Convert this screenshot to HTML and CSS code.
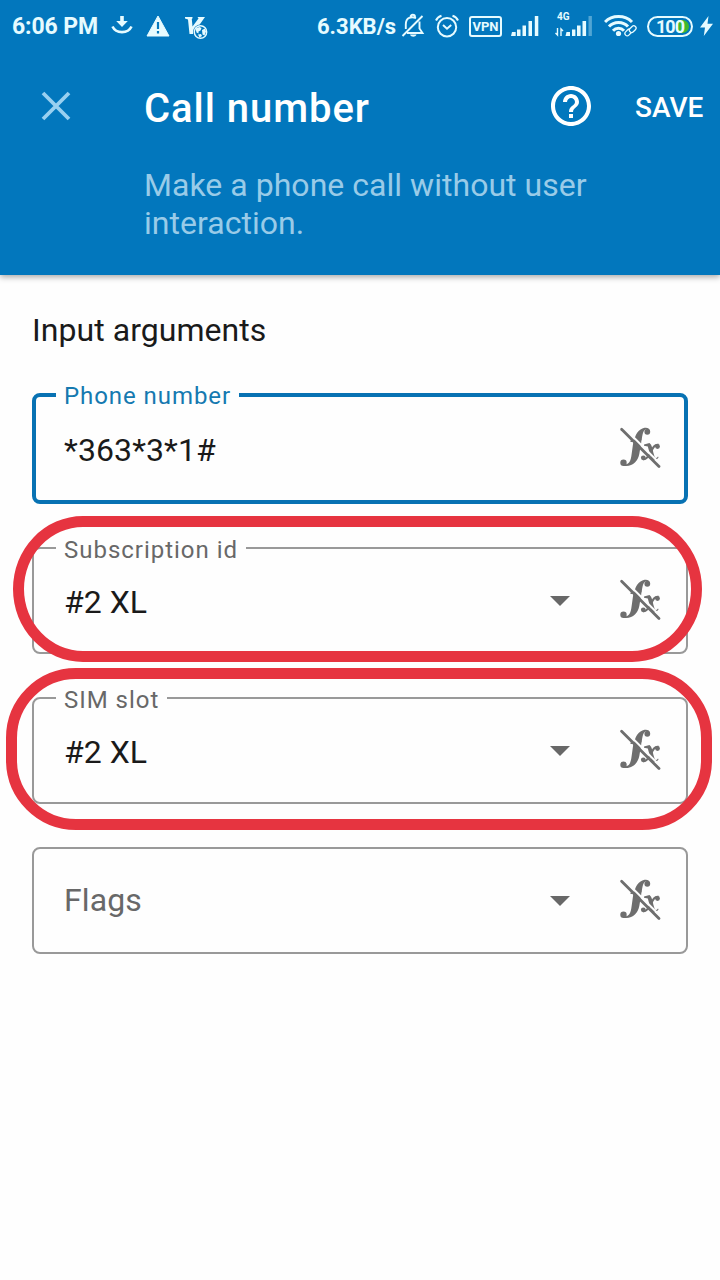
FILE: index.html
```html
<!DOCTYPE html>
<html lang="en">
<head>
<meta charset="utf-8">
<title>Call number</title>
<link rel="stylesheet" href="styles.css">
</head>
<body>
<svg class="defs" width="0" height="0" aria-hidden="true">
  <symbol id="fx-off" viewBox="0 0 48 48">
    <g fill="currentColor">
      <path d="M34 9.500C34.200 6.500 31.500 5.300 28.500 5.800C22.500 7 19.500 12.500 18.200 18.500H14.500V20H17.300L15.500 33C14.700 38.500 13.500 41.700 10 42.200L7 40V43.700C16 45.500 21.800 39.500 23.300 32L25.300 20V18.500H25.700C26.300 12.500 27.300 7.800 30 7.500Z"/>
      <circle cx="31.300" cy="9.800" r="2.900"/>
      <circle cx="7.500" cy="40.800" r="3.200"/>
      <circle cx="41.500" cy="24.500" r="2.400"/>
      <circle cx="27.300" cy="35.800" r="2.400"/>
      <path d="M28 22.500L33.500 21C36 23 36.600 27 37.300 30.500L38.500 34.500C39.300 36.500 40.500 36.500 42 34.500L42.600 35.200C40 39.500 36 38.500 34.700 35L31.800 24.500L28 23.800Z"/>
    </g>
    <path d="M42.500 22.800C38.500 21.800 36.500 26.500 34.500 30.500S30.500 38 27 37" fill="none" stroke="currentColor" stroke-width="2"/>
    <path d="M7.300 5L46.300 44" stroke="#fefefe" stroke-width="2"/>
    <path d="M5.600 7.200L43 44.600" stroke="currentColor" stroke-width="2.800" stroke-linecap="round"/>
  </symbol>
</svg>

<header class="top">
  <div class="status">
    <span class="clock">6:06 PM</span>
    <svg class="st-download" width="22" height="22" viewBox="0 0 22 22"><path d="M9.200 1h3.600v5h4L11 12 5.200 6h4z" fill="currentColor"/><path d="M1.500 11.500C5 19 17 19 20.500 11.500" fill="none" stroke="currentColor" stroke-width="2.600"/></svg>
    <svg class="st-warn" width="24" height="22" viewBox="0 0 24 22"><path d="M12 1L23 21H1z" fill="currentColor" stroke="currentColor" stroke-linejoin="round"/><path d="M12 7v7M12 16v2.500" stroke="#0277bd" stroke-width="2.200"/></svg>
    <svg class="st-vglobe" width="24" height="24" viewBox="0 0 24 24"><path d="M0 1h7.500v1.200L6.800 3 7.500 10.500 13.500 2.500 12.500 1H20L8 18H4.500L3 3.500 0 2.500z" fill="currentColor"/><circle cx="15.500" cy="16" r="7.500" fill="#0277bd"/><circle cx="15.500" cy="16" r="6.200" fill="none" stroke="currentColor" stroke-width="1.400"/><path d="M10.500 12.500l4-1.500 2 1-1 2.500-2 1v2l-2-1zM17 14l3-1.500 1 3-1.500 4-2-1zM13 18.500l3-.5 1 2-2.500 1.500z" fill="currentColor"/></svg>
    <span class="rate">6.3KB/s</span>
    <svg class="st-bell" width="24" height="26" viewBox="0 0 24 26"><g fill="none" stroke="currentColor" stroke-width="1.900"><path d="M18.500 8.500v7l3 4.500H6M4.800 16V11.500C4.800 4 10.500 3.500 15 5M9.500 4a2 2 0 0 1 4.500 0M1.500 23L21.500 3"/></g><path d="M9 21.500h6.500c-1 3-5.500 3-6.500 0z" fill="currentColor"/></svg>
    <svg class="st-alarm" width="24" height="26" viewBox="0 0 24 26"><g fill="none" stroke="currentColor" stroke-width="2"><circle cx="12" cy="14.200" r="9.200"/><path d="M1 7.500Q2.500 4 6.500 2.800M17.500 2.800Q21.500 4 23 7.500M8 12l4 3.700 4.200-3.700"/></g></svg>
    <span class="vpn">VPN</span>
    <svg class="st-sig" width="28" height="22" viewBox="0 0 28 22"><path d="M1 17h3.700v4H0zM6 14.500h3.500V21H6zM11.500 10.500H15V21h-3.500zM17.500 6H21v15h-3.500zM23.800 1h3.500v20h-3.500z" fill="currentColor"/></svg>
    <div class="lte">
      <span>4G</span>
      <svg width="38" height="22" viewBox="0 0 38 22"><path d="M2.500 13v7L.5 18M6 21v-7l2 2" fill="none" stroke="currentColor" stroke-width="1.400"/><path d="M11.500 17H15v4h-4.500zM17 14.500h3.400V21H17zM22 10.500h3.600V21H22zM27.500 6h3.600v15h-3.600z" fill="currentColor"/><path d="M33.500 1h3.400v20h-3.400z" fill="currentColor" opacity=".35"/></svg>
    </div>
    <svg class="st-wifi" width="33" height="22" viewBox="0 0 33 22"><g fill="none" stroke="currentColor" stroke-width="3"><path d="M1 7C8-.3 21-.3 28 7M5 11.500C10 6 19 6 24 11.500M9 15.700C12 12.400 17 12.400 20 15.700"/></g><circle cx="14.500" cy="18.500" r="2.600" fill="currentColor"/><g transform="rotate(-45 26 16)" fill="#0277bd" stroke="currentColor" stroke-width="1.300"><rect x="20" y="13.500" width="7.500" height="4.600" rx="2.300"/><rect x="25.500" y="14.300" width="7.500" height="4.600" rx="2.300"/></g></svg>
    <div class="battery"><span>100</span></div>
    <svg class="st-bolt" width="13" height="20" viewBox="0 0 13 20"><path d="M8.500 0L0 11.500h5L3.800 20 13 7.800H7.500z" fill="currentColor"/></svg>
  </div>
  <div class="bar">
    <svg class="close" width="30" height="30" viewBox="0 0 30 30"><path d="M2 2L28 28M28 2L2 28" stroke="currentColor" stroke-width="3.800"/></svg>
    <h1 class="title">Call number</h1>
    <svg class="help" width="48" height="48" viewBox="0 0 24 24"><path fill="currentColor" d="M11 18h2v-2h-2v2zm1-16C6.480 2 2 6.480 2 12s4.480 10 10 10 10-4.480 10-10S17.520 2 12 2zm0 18c-4.410 0-8-3.590-8-8s3.590-8 8-8 8 3.590 8 8-3.590 8-8 8zm0-14c-2.210 0-4 1.790-4 4h2c0-1.100.9-2 2-2s2 .9 2 2c0 2-3 1.750-3 5h2c0-2.250 3-2.500 3-5 0-2.210-1.790-4-4-4z"/></svg>
    <span class="save">SAVE</span>
  </div>
  <p class="subtitle">Make a phone call without user interaction.</p>
</header>

<main class="form">
  <h2 class="section">Input arguments</h2>
  <div class="field focused">
    <span class="label">Phone number</span>
    <span class="value">*363*3*1#</span>
    <svg class="fx"><use href="#fx-off"/></svg>
  </div>
  <div class="field">
    <span class="label">Subscription id</span>
    <span class="value">#2 XL</span>
    <svg class="arrow" viewBox="0 0 20 10"><path d="M0 0h20L10 10z" fill="currentColor"/></svg>
    <svg class="fx"><use href="#fx-off"/></svg>
    <i class="ring ring-sub"></i>
  </div>
  <div class="field">
    <span class="label">SIM slot</span>
    <span class="value">#2 XL</span>
    <svg class="arrow" viewBox="0 0 20 10"><path d="M0 0h20L10 10z" fill="currentColor"/></svg>
    <svg class="fx"><use href="#fx-off"/></svg>
    <i class="ring ring-sim"></i>
  </div>
  <div class="field">
    <span class="value placeholder">Flags</span>
    <svg class="arrow" viewBox="0 0 20 10"><path d="M0 0h20L10 10z" fill="currentColor"/></svg>
    <svg class="fx"><use href="#fx-off"/></svg>
  </div>
</main>
</body>
</html>
```
FILE: styles.css
```css
* { box-sizing: border-box; }
body {
  margin: 0;
  width: 720px;
  height: 1280px;
  overflow: hidden;
  background: #fefefe;
  color: #1a1a1a;
  font-family: Roboto, "Liberation Sans", sans-serif;
}
svg { display: block; flex: none; }
.defs { position: absolute; }

.top {
  height: 275px;
  background: #0277bd;
  color: #fff;
  box-shadow: 0 2px 6px rgba(0, 0, 0, .35);
}
.status {
  display: flex;
  align-items: center;
  height: 52px;
  padding-left: 12px;
  color: #e6fbff;
  white-space: nowrap;
}
.clock, .rate {
  margin-top: 2px;
  font-weight: 700;
  font-size: 23px;
  line-height: 28px;
}
.clock { width: 99px; letter-spacing: -.1px; }
.st-warn { margin-left: 13px; }
.st-vglobe { margin: 4px 0 0 15px; }
.rate { width: 84px; margin-left: 108px; font-size: 22px; }
.st-alarm { margin-left: 10px; }
.vpn {
  width: 33px;
  height: 21px;
  margin-left: 10px;
  border: 2px solid;
  border-radius: 3px;
  font-size: 13px;
  font-weight: 700;
  line-height: 18px;
  text-align: center;
}
.st-sig { margin-left: 9px; }
.lte {
  display: flex;
  flex-direction: column;
  width: 38px;
  margin-left: 16px;
  position: relative;
}
.lte span {
  position: absolute;
  left: 2px;
  top: -4px;
  font-size: 10px;
  font-weight: 700;
  line-height: 12px;
}
.st-wifi { margin-left: 11px; }
.battery {
  width: 46px;
  height: 21px;
  margin-left: 10px;
  border: 2px solid;
  border-radius: 11px;
  padding: 2px;
}
.battery span {
  display: block;
  height: 13px;
  border-radius: 7px;
  background: linear-gradient(90deg, transparent 70%, #3fb92c 70%);
  font-size: 18px;
  font-weight: 700;
  line-height: 13px;
  letter-spacing: -1px;
  text-align: center;
}
.st-bolt { margin-left: 7px; }

.bar {
  display: flex;
  align-items: center;
  height: 108px;
  padding-left: 41px;
}
.close { color: #99d0f0; }
.title {
  width: 402px;
  margin: 6px 0 0 73px;
  font-size: 40px;
  font-weight: 500;
  line-height: 48px;
  letter-spacing: .95px;
}
.help { margin-left: 1px; }
.save {
  margin: 4px 0 0 40px;
  font-size: 28px;
  font-weight: 500;
  line-height: 32px;
}
.subtitle {
  width: 480px;
  margin: 6px 0 0 144px;
  color: #99cbe8;
  font-size: 32px;
  line-height: 38px;
  letter-spacing: .03px;
}

.form { padding: 36px 32px 0; }
.section {
  margin: 0 0 44px;
  font-size: 32px;
  font-weight: 400;
  line-height: 38px;
  letter-spacing: .05px;
}
.field {
  position: relative;
  display: flex;
  align-items: center;
  height: 107px;
  margin-bottom: 43px;
  padding: 0 22px 0 30px;
  border: 2px solid #999;
  border-radius: 8px;
}
.focused {
  height: 111px;
  padding: 0 20px 0 28px;
  border: 4px solid #0872b3;
}
.label {
  position: absolute;
  left: 22px;
  top: -15px;
  padding: 0 8px;
  background: #fefefe;
  color: #686868;
  font-size: 24px;
  line-height: 32px;
  letter-spacing: .98px;
}
.focused .label { left: 20px; top: -17px; color: #1579b0; letter-spacing: .93px; }
.value {
  flex: 1;
  margin-top: 3px;
  font-size: 32px;
  line-height: 38px;
}
.focused .value { margin-top: 2px; letter-spacing: .1px; }
.placeholder { margin-top: -1px; color: #686868; letter-spacing: .1px; }
.arrow { width: 20px; height: 10px; margin-right: 46px; color: #686868; }
.fx { width: 48px; height: 48px; margin-top: -5px; color: #6e6e6e; }
.ring {
  position: absolute;
  z-index: 1;
  border: 11px solid #e63440;
  pointer-events: none;
}
.ring-sub { left: -21px; top: -33px; width: 689px; height: 146px; border-radius: 70px / 73px; }
.ring-sim { left: -28px; top: -31px; width: 706px; height: 162px; border-radius: 70px; }
```
